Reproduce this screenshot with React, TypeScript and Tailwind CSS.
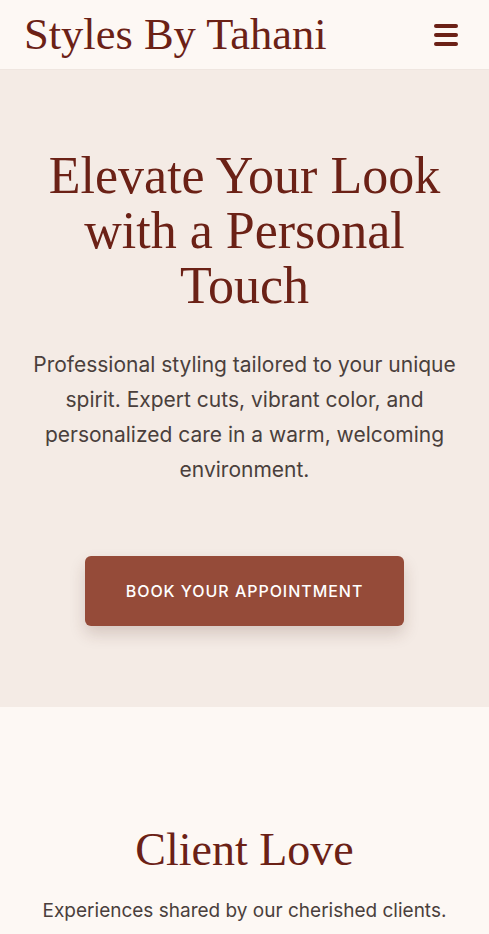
import React from "react";

const serif = "font-['Liberation_Serif','DejaVu_Serif',serif]";
const sans = "font-['Inter','Noto_Sans',sans-serif]";

function Header() {
  return (
    <header className="flex h-[70px] items-center justify-between border-b border-[#efe6e0] bg-[#fdf8f4] pl-6 pr-[31px]">
      <h1 className={`${serif} text-[44.5px] leading-none text-[#6b2116]`}>Styles By Tahani</h1>
      <button className="flex h-[22px] w-6 flex-col justify-between" aria-label="menu">
        <span className="block h-1 w-6 rounded-full bg-[#6b2116]"></span>
        <span className="block h-1 w-6 rounded-full bg-[#6b2116]"></span>
        <span className="block h-1 w-6 rounded-full bg-[#6b2116]"></span>
      </button>
    </header>
  );
}

function Hero() {
  return (
    <section className="flex flex-col items-center bg-[#f4ebe5] px-6 pt-[78px] pb-[81px] text-center">
      <h2 className={`${serif} max-w-[400px] text-[52px] leading-[55px] text-[#6b2116]`}>
        Elevate Your Look with a Personal Touch
      </h2>
      <p className={`${sans} mt-[34px] text-[21px] leading-[35px] text-[#4a3f3c]`}>
        Professional styling tailored to your unique spirit. Expert cuts, vibrant color, and personalized care in a
        warm, welcoming environment.
      </p>
      <button
        className={`${sans} mt-[69px] h-[70px] w-[319px] rounded-md bg-[#954b39] text-[16px] font-medium tracking-[0.06em] text-white shadow-[0_8px_16px_rgba(80,40,30,0.18)]`}
      >
        BOOK YOUR APPOINTMENT
      </button>
    </section>
  );
}

function Reviews() {
  return (
    <section className="flex flex-col items-center bg-[#fdf8f4] px-6 pt-[114px] pb-10 text-center">
      <h2 className={`${serif} text-[46px] leading-tight text-[#6b2116]`}>Client Love</h2>
      <p className={`${sans} mt-[18px] text-[19px] leading-7 text-[#4a3f3c]`}>Experiences shared by our cherished clients.</p>
    </section>
  );
}

export default function App() {
  return (
    <div className="min-h-screen bg-[#fdf8f4]">
      <Header />
      <Hero />
      <Reviews />
    </div>
  );
}
